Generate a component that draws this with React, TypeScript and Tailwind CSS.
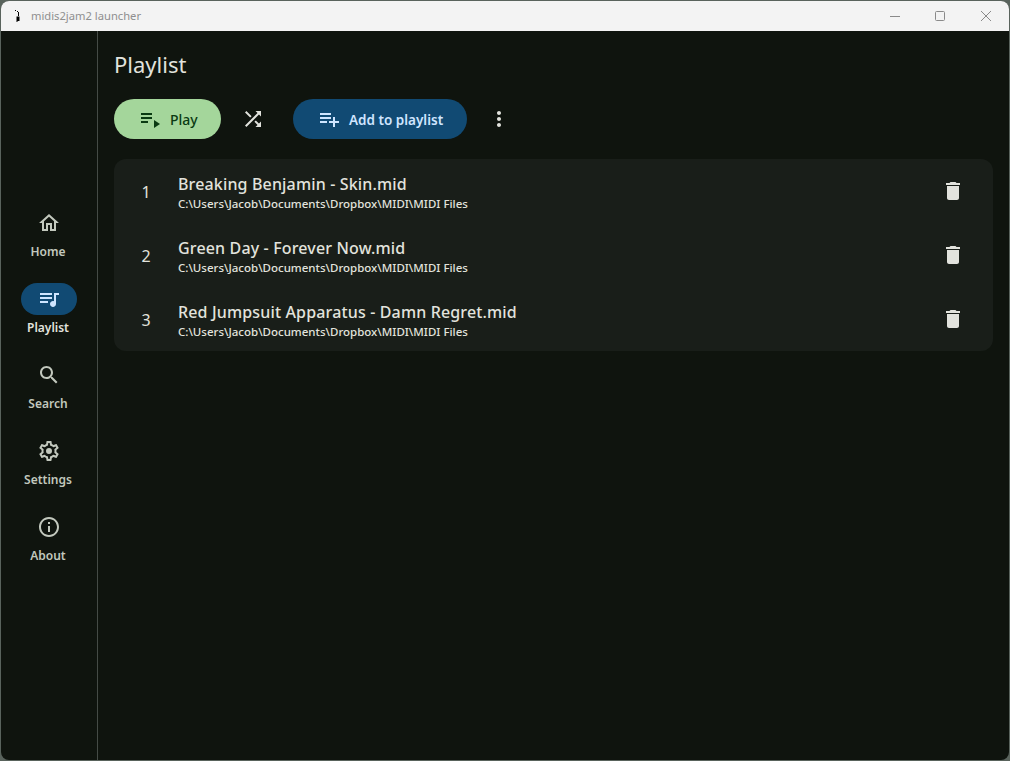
const font = "font-['Noto_Sans',sans-serif]";

function Icon({ d, className }: { d: string; className?: string }) {
  return (
    <svg viewBox="0 0 24 24" fill="currentColor" className={"h-6 w-6 shrink-0 " + (className ?? "")}>
      <path d={d} />
    </svg>
  );
}

const paths = {
  home: "M12 5.69l5 4.5V18h-2v-6H9v6H7v-7.81l5-4.5M12 3L2 12h3v8h6v-6h2v6h6v-8h3L12 3z",
  queue: "M15 6H3v2h12V6zm0 4H3v2h12v-2zM3 16h8v-2H3v2zM17 6v8.18c-.31-.11-.65-.18-1-.18-1.66 0-3 1.34-3 3s1.34 3 3 3 3-1.34 3-3V8h3V6h-5z",
  search: "M15.5 14h-.79l-.28-.27C15.41 12.59 16 11.11 16 9.5 16 5.91 13.09 3 9.5 3S3 5.91 3 9.5 5.91 16 9.5 16c1.61 0 3.09-.59 4.23-1.57l.27.28v.79l5 4.99L20.49 19l-4.99-5zm-6 0C7.01 14 5 11.99 5 9.5S7.01 5 9.5 5 14 7.01 14 9.5 11.99 14 9.5 14z",
  settings: "M19.43 12.98c.04-.32.07-.64.07-.98 0-.34-.03-.66-.07-.98l2.11-1.65c.19-.15.24-.42.12-.64l-2-3.46c-.09-.16-.26-.25-.44-.25-.06 0-.12.01-.17.03l-2.49 1c-.52-.4-1.08-.73-1.69-.98l-.38-2.65C14.46 2.18 14.25 2 14 2h-4c-.25 0-.46.18-.49.42l-.38 2.65c-.61.25-1.17.59-1.69.98l-2.49-1c-.06-.02-.12-.03-.18-.03-.17 0-.34.09-.43.25l-2 3.46c-.13.22-.07.49.12.64l2.11 1.65c-.04.32-.07.65-.07.98 0 .33.03.66.07.98l-2.11 1.65c-.19.15-.24.42-.12.64l2 3.46c.09.16.26.25.44.25.06 0 .12-.01.17-.03l2.49-1c.52.4 1.08.73 1.69.98l.38 2.65c.03.24.24.42.49.42h4c.25 0 .46-.18.49-.42l.38-2.65c.61-.25 1.17-.59 1.69-.98l2.49 1c.06.02.12.03.18.03.17 0 .34-.09.43-.25l2-3.46c.12-.22.07-.49-.12-.64l-2.11-1.65zm-1.98-1.71c.04.31.05.52.05.73 0 .21-.02.43-.05.73l-.14 1.13.89.7 1.08.84-.7 1.21-1.27-.51-1.04-.42-.9.68c-.43.32-.84.56-1.25.73l-1.06.43-.16 1.13-.2 1.35h-1.4l-.19-1.35-.16-1.13-1.06-.43c-.43-.18-.83-.41-1.23-.71l-.91-.7-1.06.43-1.27.51-.7-1.21 1.08-.84.89-.7-.14-1.13c-.03-.31-.05-.54-.05-.74s.02-.43.05-.73l.14-1.13-.89-.7-1.08-.84.7-1.21 1.27.51 1.04.42.9-.68c.43-.32.84-.56 1.25-.73l1.06-.43.16-1.13.2-1.35h1.39l.19 1.35.16 1.13 1.06.43c.43.18.83.41 1.23.71l.91.7 1.06-.43 1.27-.51.7 1.21-1.07.85-.89.7.14 1.13zM12 9a3 3 0 1 0 0 6 3 3 0 0 0 0-6z",
  info: "M11 7h2v2h-2zm0 4h2v6h-2zm1-9C6.48 2 2 6.48 2 12s4.48 10 10 10 10-4.48 10-10S17.52 2 12 2zm0 18c-4.41 0-8-3.59-8-8s3.59-8 8-8 8 3.59 8 8-3.59 8-8 8z",
  playlistPlay: "M3 10h11v2H3zm0-4h11v2H3zm0 8h7v2H3zm13-1v8l6-4z",
  shuffle: "M10.59 9.17L5.41 4 4 5.41l5.17 5.17 1.42-1.41zM14.5 4l2.04 2.04L4 18.59 5.41 20 17.96 7.46 20 9.5V4h-5.5zm.33 9.41l-1.41 1.41 3.13 3.13L14.5 20H20v-5.5l-2.04 2.04-3.13-3.13z",
  playlistAdd: "M14 10H3v2h11v-2zm0-4H3v2h11V6zm4 8v-4h-2v4h-4v2h4v4h2v-4h4v-2h-4zM3 16h7v-2H3v2z",
  more: "M12 8c1.1 0 2-.9 2-2s-.9-2-2-2-2 .9-2 2 .9 2 2 2zm0 2c-1.1 0-2 .9-2 2s.9 2 2 2 2-.9 2-2-.9-2-2-2zm0 6c-1.1 0-2 .9-2 2s.9 2 2 2 2-.9 2-2-.9-2-2-2z",
  trash: "M6 19c0 1.1.9 2 2 2h8c1.1 0 2-.9 2-2V7H6v12zM19 4h-3.5l-1-1h-5l-1 1H5v2h14V4z",
};

const nav = [
  { label: "Home", icon: paths.home },
  { label: "Playlist", icon: paths.queue, active: true },
  { label: "Search", icon: paths.search },
  { label: "Settings", icon: paths.settings },
  { label: "About", icon: paths.info },
];

const songs = ["Breaking Benjamin - Skin.mid", "Green Day - Forever Now.mid", "Red Jumpsuit Apparatus - Damn Regret.mid"];

function TitleBar() {
  return (
    <div className="flex h-[30px] shrink-0 items-center bg-[#f3f3f3] pl-[14px]">
      <svg viewBox="0 0 6 12" className="h-3 w-1.5 text-black" fill="currentColor">
        <path d="M0 0h1v1H0zM2 1h1v1H2zM3 2h1v4H3zM1.500 6.500h3V11h-2v1h-1z" />
      </svg>
      <span className="ml-[10px] text-[11.2px] text-[#8f8f8f]">midis2jam2 launcher</span>
      <div className="ml-auto flex items-center text-[#8a8a8a]">
        <svg viewBox="0 0 10 10" className="h-2.5 w-2.5" stroke="currentColor" fill="none">
          <path d="M0 5.500h10" />
        </svg>
        <svg viewBox="0 0 10 10" className="ml-[35px] h-2.5 w-2.5" stroke="currentColor" fill="none">
          <rect x="0.500" y="0.500" width="9" height="9" rx="1" />
        </svg>
        <svg viewBox="0 0 10 10" className="ml-[36px] mr-[18px] h-2.5 w-2.5" stroke="currentColor" fill="none">
          <path d="M0 0l10 10M10 0L0 10" />
        </svg>
      </div>
    </div>
  );
}

function Sidebar() {
  return (
    <div className="flex w-[97px] shrink-0 flex-col items-center justify-center gap-[23px] border-r border-[#454b46] pb-[21px]">
      {nav.map((n) => (
        <div key={n.label} className="flex w-full flex-col items-center">
          <div className={"flex h-8 w-14 items-center justify-center rounded-full " + (n.active ? "bg-[#114a73] text-[#cfe5ff]" : "text-[#c2c8bd]")}>
            <Icon d={n.icon} />
          </div>
          <span className={"mt-[5px] pr-0.5 text-xs leading-4 font-semibold " + (n.active ? "text-[#e2e3dd]" : "text-[#c2c8bd]")}>{n.label}</span>
        </div>
      ))}
    </div>
  );
}

function SongRow({ index, name }: { index: number; name: string }) {
  return (
    <div className="flex h-16 items-center pl-4 pr-5">
      <span className="mr-4 w-8 pt-0.5 text-center text-base text-[#e2e3dd]">{index}</span>
      <div className="flex min-w-0 flex-1 flex-col pt-0.5">
        <span className="text-base leading-6 font-medium tracking-[0.15px] text-[#e2e3dd]">{name}</span>
        <span className="text-[11.5px] leading-4 font-medium text-[#e2e3dd]">C:\Users\Jacob\Documents\Dropbox\MIDI\MIDI Files</span>
      </div>
      <div className="flex h-10 w-10 items-center justify-center text-[#e2e3dd]">
        <Icon d={paths.trash} />
      </div>
    </div>
  );
}

export default function App() {
  return (
    <div className={"h-[761px] w-[1010px] bg-[#59635c] p-px " + font}>
      <div className="flex h-full flex-col overflow-hidden rounded-lg bg-[#0f140e]">
        <TitleBar />
        <div className="flex min-h-0 flex-1">
          <Sidebar />
          <main className="flex min-w-0 flex-1 flex-col pl-4 pr-4 pt-[17px]">
            <h1 className="text-[22px] leading-8 text-[#e2e3dd]">Playlist</h1>
            <div className="mt-[19px] flex items-center">
              <div className="flex h-10 w-[107px] items-center gap-2 rounded-full bg-[#a4d69b] pl-6 text-sm font-medium text-[#0a3a12]">
                <Icon d={paths.playlistPlay} />
                <span className="pt-0.5">Play</span>
              </div>
              <div className="ml-3 flex h-10 w-10 items-center justify-center text-[#e2e3dd]">
                <Icon d={paths.shuffle} />
              </div>
              <div className="ml-5 flex h-10 w-[174px] items-center gap-2 rounded-full bg-[#114a73] pl-6 text-[13.5px] font-semibold text-[#cfe5ff]">
                <Icon d={paths.playlistAdd} />
                <span className="pt-0.5">Add to playlist</span>
              </div>
              <div className="ml-3 flex h-10 w-10 items-center justify-center text-[#e2e3dd]">
                <Icon d={paths.more} />
              </div>
            </div>
            <div className="mt-5 rounded-xl bg-[#191e19]">
              {songs.map((s, i) => (
                <SongRow key={s} index={i + 1} name={s} />
              ))}
            </div>
          </main>
        </div>
      </div>
    </div>
  );
}
